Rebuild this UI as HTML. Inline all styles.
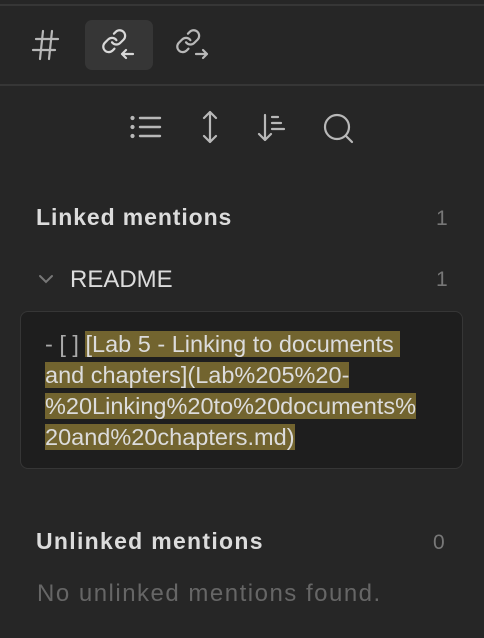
<!DOCTYPE html>
<html><head><meta charset="utf-8"><style>
html,body{margin:0;padding:0;background:#262626;width:484px;height:638px;overflow:hidden;font-family:"Liberation Sans",sans-serif;}
.abs{position:absolute;white-space:nowrap;}
.line{position:absolute;left:0;width:484px;height:2px;background:#363636;}
.hl{background:#72642f;color:#dcdcdc;}
</style></head><body>
<div class="line" style="top:4px"></div>
<div class="line" style="top:84px"></div>
<div class="abs" style="left:85px;top:20px;width:68px;height:50px;background:#363636;border-radius:7px"></div>
<svg class="abs" style="left:0;top:0" width="484" height="160" fill="none" stroke="#b8b8b8" stroke-width="2.2" stroke-linecap="round" stroke-linejoin="round">
 <path d="M36 39h22M33 50h22M43 31l-3 28M52 31l-3 28"/>
 <g stroke="#d8d8d8">
 <g transform="translate(101 28) scale(1.1)" stroke-width="2"><path d="M10 13a5 5 0 0 0 7.54.54l3-3a5 5 0 0 0-7.07-7.07l-1.72 1.71"/><path d="M14 11a5 5 0 0 0-7.54-.54l-3 3a5 5 0 0 0 7.07 7.07l1.71-1.71"/></g>
 <path d="M133 54h-11M126 50l-4 4 4 4"/>
 </g>
 <g transform="translate(175 28) scale(1.1)" stroke-width="2"><path d="M10 13a5 5 0 0 0 7.54.54l3-3a5 5 0 0 0-7.07-7.07l-1.72 1.71"/><path d="M14 11a5 5 0 0 0-7.54-.54l-3 3a5 5 0 0 0 7.07 7.07l1.71-1.71"/></g>
 <path d="M196 54h11M203 50l4 4-4 4"/>
 <path d="M140 118h20M140 127h20M140 136h20" stroke-width="2.4"/>
 <circle cx="132.5" cy="118" r="1" fill="#b8b8b8"/><circle cx="132.5" cy="127" r="1" fill="#b8b8b8"/><circle cx="132.5" cy="136" r="1" fill="#b8b8b8"/>
 <path d="M210 112v30M204 118l6-6 6 6M204 136l6 6 6-6"/>
 <path d="M265 115v25M259 134l6 6 6-6M272 117h6M272 123h9M272 129h12"/>
 <circle cx="337" cy="127" r="12"/><path d="M346 136l6 6"/>
</svg>
<div class="abs" style="left:36px;top:204px;font-size:23px;letter-spacing:0.9px;font-weight:bold;color:#dcdcdc">Linked mentions</div>
<div class="abs" style="left:436px;top:207px;font-size:21px;color:#777">1</div>
<svg class="abs" style="left:38px;top:273px" width="16" height="12" fill="none" stroke="#777" stroke-width="2" stroke-linecap="round"><path d="M2 3l6 6 6-6"/></svg>
<div class="abs" style="left:70px;top:266px;font-size:24px;color:#dcdcdc">README</div>
<div class="abs" style="left:436px;top:268px;font-size:21px;color:#777">1</div>
<div class="abs" style="left:20px;top:311px;width:443px;height:158px;background:#1e1e1e;border:1px solid #363636;border-radius:8px;box-sizing:border-box"></div>
<div class="abs" style="left:45px;top:329px;font-size:23.5px;line-height:31px;color:#dcdcdc">
<div><span style="color:#aaa">- [ ] </span><span class="hl">[Lab 5 - Linking to documents&nbsp;</span></div>
<div><span class="hl">and chapters](Lab%205%20-</span></div>
<div><span class="hl">%20Linking%20to%20documents%</span></div>
<div><span class="hl">20and%20chapters.md)</span></div>
</div>
<div class="abs" style="left:36px;top:528px;font-size:23px;letter-spacing:1.3px;font-weight:bold;color:#dcdcdc">Unlinked mentions</div>
<div class="abs" style="left:433px;top:531px;font-size:21px;color:#777">0</div>
<div class="abs" style="left:37px;top:580px;font-size:24px;letter-spacing:1.5px;color:#666">No unlinked mentions found.</div>
</body></html>
